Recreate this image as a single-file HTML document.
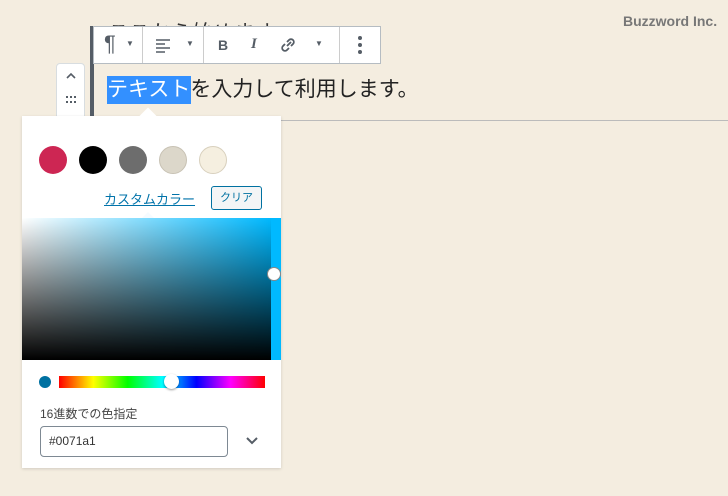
<!DOCTYPE html>
<html><head><meta charset="utf-8"><style>
body{margin:0;width:728px;height:496px;background:#f4ede0;position:relative;overflow:hidden;font-family:"Liberation Sans","Noto Sans CJK JP",sans-serif}
.a{position:absolute}
</style></head><body>
<div class="a" style="left:623px;top:13px;font-size:14px;font-weight:bold;color:#777">Buzzword Inc.</div>
<div class="a" style="left:108px;top:17px;font-size:21px;color:#333">ここから始めます</div>
<div class="a" style="left:90px;top:26px;width:4px;height:95px;background:#555d66"></div>
<div class="a" style="left:93px;top:120px;width:635px;height:1px;background:#bbb"></div>
<div class="a" style="left:93px;top:26px;width:286px;height:36px;background:#fff;border:1px solid #b5bcc2;display:flex">
 <div style="width:48px;border-right:1px solid #ccc;position:relative"><span class="a" style="left:10px;top:4px;font-size:22px;color:#555d66">¶</span><span class="a" style="left:32px;top:12px;font-size:8px;color:#555d66">▼</span></div>
 <div style="width:60px;border-right:1px solid #ccc;position:relative">
  <svg class="a" style="left:12px;top:10px" width="16" height="16"><path d="M1 3h14M1 7h9M1 11h14M1 15h9" stroke="#555d66" stroke-width="1.6"/></svg>
  <span class="a" style="left:43px;top:12px;font-size:8px;color:#555d66">▼</span></div>
 <div style="width:135px;border-right:1px solid #ccc;position:relative">
  <span class="a" style="left:14px;top:10px;font-size:14px;font-weight:bold;color:#555d66">B</span>
  <span class="a" style="left:47px;top:9px;font-size:15px;font-style:italic;font-weight:bold;font-family:'Liberation Serif',serif;color:#555d66">I</span>
  <svg class="a" style="left:75px;top:9px" width="18" height="18"><path d="M8 10l4-4M6 8l-2 2a2.5 2.5 0 0 0 4 4l2-2M12 10l2-2a2.5 2.5 0 0 0-4-4l-2 2" stroke="#555d66" stroke-width="1.8" fill="none"/></svg>
  <span class="a" style="left:111px;top:12px;font-size:8px;color:#555d66">▼</span></div>
 <div style="width:40px;position:relative"><svg class="a" style="left:17px;top:8px" width="6" height="22"><circle cx="3" cy="3" r="2" fill="#555d66"/><circle cx="3" cy="10" r="2" fill="#555d66"/><circle cx="3" cy="17" r="2" fill="#555d66"/></svg></div>
</div>
<div class="a" style="left:56px;top:63px;width:27px;height:52px;background:#fff;border:1px solid #d8dde0;border-radius:4px 4px 0 0">
 <svg class="a" style="left:8px;top:8px" width="12" height="8"><path d="M2 6l4-4 4 4" stroke="#555d66" stroke-width="1.6" fill="none"/></svg>
 <svg class="a" style="left:9px;top:32px" width="10" height="8"><g fill="#555d66"><rect x="0" y="0" width="2" height="2"/><rect x="4" y="0" width="2" height="2"/><rect x="8" y="0" width="2" height="2"/><rect x="0" y="5" width="2" height="2"/><rect x="4" y="5" width="2" height="2"/><rect x="8" y="5" width="2" height="2"/></g></svg>
</div>
<div class="a" style="left:107px;top:76px;width:84px;height:28px;background:#3390ff"></div>
<div class="a" style="left:107px;top:76px;font-size:21px;line-height:28px;color:#222;white-space:nowrap"><span style="color:#fff">テキスト</span>を入力して利用します。</div>
<div class="a" style="left:22px;top:116px;width:259px;height:352px;background:#fff;box-shadow:0 1px 3px rgba(0,0,0,.15)"></div>
<div class="a" style="left:142px;top:110px;width:12px;height:12px;background:#fff;transform:rotate(45deg)"></div>
<div class="a" style="left:39px;top:146px;width:28px;height:28px;border-radius:50%;background:#cd2653"></div>
<div class="a" style="left:79px;top:146px;width:28px;height:28px;border-radius:50%;background:#000"></div>
<div class="a" style="left:119px;top:146px;width:28px;height:28px;border-radius:50%;background:#6d6d6d"></div>
<div class="a" style="left:159px;top:146px;width:26px;height:26px;border-radius:50%;background:#dcd7ca;border:1px solid #c8c2b4"></div>
<div class="a" style="left:199px;top:146px;width:26px;height:26px;border-radius:50%;background:#f5efe0;border:1px solid #d8d0bd"></div>
<div class="a" style="left:104px;top:189px;font-size:13px;color:#0073aa;text-decoration:underline">カスタムカラー</div>
<div class="a" style="left:211px;top:186px;width:49px;height:22px;border:1px solid #0071a1;border-radius:3px;background:#f3f5f6;font-size:11px;color:#0071a1;text-align:center;line-height:22px">クリア</div>
<div class="a" style="left:22px;top:218px;width:249px;height:142px;background:linear-gradient(to bottom,rgba(0,0,0,0),#000),linear-gradient(to right,#fff,#00b9ff)"></div>
<div class="a" style="left:142px;top:212px;width:0;height:0;border:6px solid transparent;border-bottom-color:#f5fbff;border-top:0"></div>
<div class="a" style="left:271px;top:218px;width:10px;height:142px;background:#00b9ff"></div>
<div class="a" style="left:267px;top:267px;width:12px;height:12px;border-radius:50%;background:#fff;border:1px solid #888"></div>
<div class="a" style="left:39px;top:376px;width:12px;height:12px;border-radius:50%;background:#0071a1"></div>
<div class="a" style="left:59px;top:376px;width:206px;height:12px;background:linear-gradient(to right,#f00,#ff0,#0f0,#0ff,#00f,#f0f,#f00)"></div>
<div class="a" style="left:164px;top:374px;width:15px;height:15px;border-radius:50%;background:#fff;box-shadow:0 1px 2px rgba(0,0,0,.4)"></div>
<div class="a" style="left:40px;top:405px;font-size:12px;color:#444">16進数での色指定</div>
<div class="a" style="left:40px;top:426px;font-size:12px;color:#333;line-height:29px;padding-left:8px;box-sizing:border-box;width:188px;height:31px;border:1px solid #7e8993;border-radius:4px">#0071a1</div>
<svg class="a" style="left:245px;top:436px" width="14" height="10"><path d="M2 2l5 5 5-5" stroke="#555d66" stroke-width="2" fill="none"/></svg>
</body></html>
